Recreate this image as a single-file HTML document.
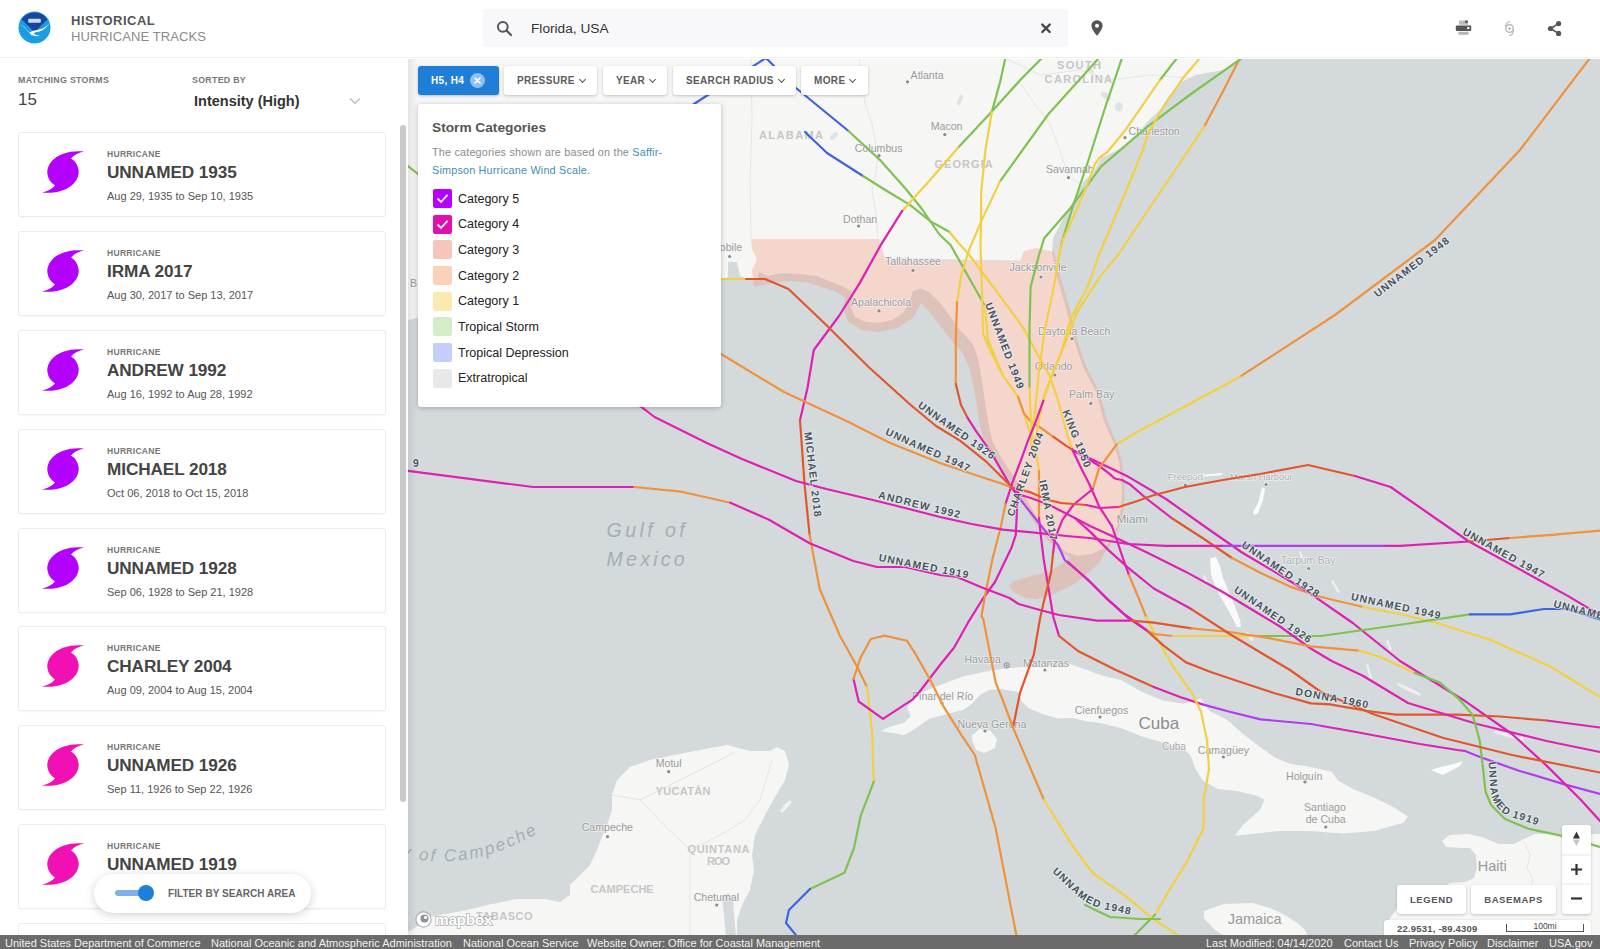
<!DOCTYPE html>
<html lang="en">
<head>
<meta charset="utf-8">
<title>Historical Hurricane Tracks</title>
<style>
*{box-sizing:border-box;margin:0;padding:0}
html,body{width:1600px;height:949px;overflow:hidden;background:#fff;font-family:"Liberation Sans",sans-serif;color:#444}
#app{position:relative;width:1600px;height:949px;overflow:hidden}
/* header */
#hdr{position:absolute;left:0;top:0;width:1600px;height:58px;background:#fff;border-bottom:1px solid #efefef;z-index:5}
#logo{position:absolute;left:18px;top:11px;width:33px;height:33px}
#t1{position:absolute;left:71px;top:12.5px;font-size:13px;font-weight:bold;letter-spacing:.5px;color:#555;line-height:16px}
#t2{position:absolute;left:71px;top:29px;font-size:13px;letter-spacing:.1px;color:#8a8a8a;line-height:16px}
#search{position:absolute;left:483px;top:9px;width:585px;height:38px;background:#f8f8fb;border-radius:2px}
#search .q{position:absolute;left:48px;top:11px;font-size:13.7px;color:#333;line-height:17px}
.abs{position:absolute}
/* sidebar */
#side{position:absolute;left:0;top:59px;width:408px;height:876px;background:#fff;overflow:hidden;z-index:3}
.lbl{position:absolute;font-size:8.8px;font-weight:bold;letter-spacing:.3px;color:#777;line-height:10px}
#cnt{position:absolute;left:18px;top:31px;font-size:17px;color:#444;line-height:20px}
#sort{position:absolute;left:194px;top:34px;font-size:14.5px;font-weight:bold;color:#333;line-height:17px}
.card{position:absolute;left:18px;width:368px;height:85px;border:1px solid #ececec;border-radius:3px;background:#fff;box-shadow:0 1px 2px rgba(0,0,0,.03)}
.card svg{position:absolute;left:22px;top:17px;width:44px;height:44px}
.card .k{position:absolute;left:88px;top:16px;font-size:8.5px;font-weight:bold;letter-spacing:.3px;color:#777;line-height:10px}
.card .n{position:absolute;left:88px;top:28px;font-size:17.2px;font-weight:bold;color:#444;line-height:22px;letter-spacing:-.1px;white-space:nowrap}
.card .d{position:absolute;left:88px;top:57px;font-size:11px;color:#555;line-height:13px;white-space:nowrap}
#sbar{position:absolute;left:400px;top:66px;width:6px;height:677px;background:#c9c9c9;border-radius:3px}
#pill{position:absolute;left:94px;top:815px;width:217px;height:39px;border-radius:20px;background:#fff;box-shadow:0 2px 10px rgba(0,0,0,.18)}
#pill .tr{position:absolute;left:21px;top:16px;width:30px;height:6px;border-radius:3px;background:#7fb2e8}
#pill .kn{position:absolute;left:44px;top:11px;width:16px;height:16px;border-radius:8px;background:#1f7ed8}
#pill .tx{position:absolute;left:74px;top:14px;font-size:10px;font-weight:bold;letter-spacing:.05px;color:#666;line-height:12px;white-space:nowrap}
/* map */
#map{position:absolute;left:408px;top:59px;width:1192px;height:876px;background:#d4dadc;overflow:hidden;z-index:1}
#map svg.m{position:absolute;left:-408px;top:-59px;width:1600px;height:949px}
#mshadow{position:absolute;left:408px;top:59px;width:9px;height:876px;background:linear-gradient(to right,rgba(0,0,0,.075),rgba(0,0,0,0));z-index:2}
/* footer */
#ftr{position:absolute;left:0;top:935px;width:1600px;height:14px;background:#6b6b6b;color:#f1f1f1;font-size:11px;line-height:14px;z-index:6;white-space:nowrap}
#ftr span{position:absolute;top:1px}
/* filter bar */
.btn{position:absolute;top:66px;height:29px;background:#fff;border-radius:3px;box-shadow:0 1px 3px rgba(0,0,0,.22);font-size:10px;font-weight:bold;letter-spacing:.35px;color:#5b5b5b;line-height:29px;text-align:left;padding-left:13px;z-index:4;white-space:nowrap}
.btn i{display:inline-block;width:5px;height:5px;border-right:1.6px solid #555;border-bottom:1.6px solid #555;transform:rotate(45deg);margin-left:5px;position:relative;top:-2px}
#pop{position:absolute;left:418px;top:104px;width:303px;height:303px;background:#fff;border-radius:3px;box-shadow:0 1px 5px rgba(0,0,0,.25);z-index:4}
#pop h3{position:absolute;left:14px;top:16px;font-size:13.7px;font-weight:bold;color:#555;line-height:16px}
#pop p{position:absolute;left:14px;top:40px;font-size:10.8px;letter-spacing:.2px;line-height:17.8px;color:#8a8a8a;width:285px;white-space:nowrap}
#pop p b{font-weight:normal;color:#3f8fb0}
.row{position:absolute;left:15px;height:19px}
.row s{position:absolute;left:0;top:0;width:19px;height:19px;border-radius:2px;text-decoration:none}
.row u{position:absolute;left:25px;top:2.7px;font-size:12.5px;color:#222;text-decoration:none;line-height:15px;white-space:nowrap}
.mbtn{position:absolute;background:#fff;border-radius:3px;box-shadow:0 1px 3px rgba(0,0,0,.22);z-index:4;font-size:9.5px;font-weight:bold;letter-spacing:.6px;color:#555;text-align:center}
</style>
</head>
<body>
<div id="app">
<div id="hdr">
<svg id="logo" viewBox="0 0 34 34"><circle cx="17" cy="17" r="16.5" fill="#1a9ee0"/><path d="M3.5 8.5 A16.5 16.5 0 0 1 30.5 8.5 L17 22 Z" fill="#16479d"/><path d="M1.2 12.5 C7 17 11 21 14.5 25.5 C15.5 23 18 21.5 21 21.5 C26 20 30.5 16 32.8 12 C29 17 24 19 19.5 19.5 C16 20 13.5 21 12.5 22.5 C9 18.5 5 15 1.2 12.5 Z" fill="#fff"/><path d="M12 22 C14 25.5 18 27 22.5 25 C19 25.2 16 24 14.5 21 Z" fill="#fff"/><rect x="10.5" y="8" width="13" height="4" rx="1" fill="#dfe8f6" opacity=".9"/></svg>
<div id="t1">HISTORICAL</div>
<div id="t2">HURRICANE TRACKS</div>
<div id="search">
<svg class="abs" style="left:13px;top:11px;width:17px;height:17px" viewBox="0 0 17 17"><circle cx="6.8" cy="6.8" r="4.9" fill="none" stroke="#555" stroke-width="2"/><path d="M10.6 10.6 L15 15" stroke="#555" stroke-width="2.2" stroke-linecap="round"/></svg>
<div class="q">Florida, USA</div>
<svg class="abs" style="left:557px;top:13px;width:12px;height:12px" viewBox="0 0 12 12"><path d="M2.3 2.6 L9.7 10 M9.7 2.6 L2.3 10" stroke="#484848" stroke-width="2.4" stroke-linecap="round"/></svg>
</div>
<svg class="abs" style="left:1091px;top:20px;width:12px;height:16px" viewBox="0 0 12 16"><path d="M6 0.3 C2.8 0.3 0.4 2.7 0.4 5.8 C0.4 9.6 6 15.7 6 15.7 C6 15.7 11.6 9.6 11.6 5.8 C11.6 2.7 9.2 0.3 6 0.3 Z" fill="#555"/><circle cx="6" cy="5.8" r="2" fill="#fff"/></svg>
<svg class="abs" style="left:1455px;top:20px;width:17px;height:16px" viewBox="0 0 17 16"><rect x="4" y="0.5" width="9" height="4.2" fill="#bbb"/><rect x="10" y="0.5" width="3" height="2.5" fill="#666"/><rect x="0.8" y="5.4" width="15.4" height="5.6" rx="1" fill="#555"/><rect x="12.2" y="7" width="2.2" height="2" fill="#fff"/><rect x="3.5" y="11.8" width="10" height="3" fill="#b5b5b5"/></svg>
<svg class="abs" style="left:1503px;top:20px;width:13px;height:17px" viewBox="0 0 13 17"><circle cx="6.5" cy="8.5" r="3.8" fill="none" stroke="#b9b9b9" stroke-width="1.4"/><circle cx="6.5" cy="8.5" r="1" fill="#888"/><path d="M2.7 8.5 C2 4.5 4 2 7 1.3 M10.3 8.5 C11 12.5 9 15 6 15.7" fill="none" stroke="#c2c2c2" stroke-width="1.3"/></svg>
<svg class="abs" style="left:1547px;top:20px;width:16px;height:17px" viewBox="0 0 16 17"><path d="M3.5 8.5 L11.5 3.6 M3.5 8.5 L11.5 13.4" stroke="#555" stroke-width="1.6"/><circle cx="3.5" cy="8.5" r="2.6" fill="#555"/><circle cx="11.6" cy="3.6" r="2.6" fill="#555"/><circle cx="11.6" cy="13.4" r="2.6" fill="#555"/></svg>
</div>
<div id="side">
<div class="lbl" style="left:18px;top:16px">MATCHING STORMS</div>
<div id="cnt">15</div>
<div class="lbl" style="left:192px;top:16px">SORTED BY</div>
<div id="sort">Intensity (High)</div>
<svg class="abs" style="left:349px;top:38px;width:12px;height:8px" viewBox="0 0 12 8"><path d="M1 1.5 L6 6.3 L11 1.5" fill="none" stroke="#bdbdbd" stroke-width="1.4"/></svg>
<div class="card" style="top:73px"><svg viewBox="0 0 44 44"><path d="M43 1.5 C32 0 17 3 10.5 11.5 A15.5 15.5 0 0 0 14 35.5 C11 39 6 41.5 1 42.5 C12 44 27 41 33.5 32.5 A15.5 15.5 0 0 0 30 8.5 C33 5 38 2.5 43 1.5 Z" fill="#b400ff"/></svg><div class="k">HURRICANE</div><div class="n">UNNAMED 1935</div><div class="d">Aug 29, 1935 to Sep 10, 1935</div></div>
<div class="card" style="top:172px"><svg viewBox="0 0 44 44"><path d="M43 1.5 C32 0 17 3 10.5 11.5 A15.5 15.5 0 0 0 14 35.5 C11 39 6 41.5 1 42.5 C12 44 27 41 33.5 32.5 A15.5 15.5 0 0 0 30 8.5 C33 5 38 2.5 43 1.5 Z" fill="#b400ff"/></svg><div class="k">HURRICANE</div><div class="n">IRMA 2017</div><div class="d">Aug 30, 2017 to Sep 13, 2017</div></div>
<div class="card" style="top:271px"><svg viewBox="0 0 44 44"><path d="M43 1.5 C32 0 17 3 10.5 11.5 A15.5 15.5 0 0 0 14 35.5 C11 39 6 41.5 1 42.5 C12 44 27 41 33.5 32.5 A15.5 15.5 0 0 0 30 8.5 C33 5 38 2.5 43 1.5 Z" fill="#b400ff"/></svg><div class="k">HURRICANE</div><div class="n">ANDREW 1992</div><div class="d">Aug 16, 1992 to Aug 28, 1992</div></div>
<div class="card" style="top:370px"><svg viewBox="0 0 44 44"><path d="M43 1.5 C32 0 17 3 10.5 11.5 A15.5 15.5 0 0 0 14 35.5 C11 39 6 41.5 1 42.5 C12 44 27 41 33.5 32.5 A15.5 15.5 0 0 0 30 8.5 C33 5 38 2.5 43 1.5 Z" fill="#b400ff"/></svg><div class="k">HURRICANE</div><div class="n">MICHAEL 2018</div><div class="d">Oct 06, 2018 to Oct 15, 2018</div></div>
<div class="card" style="top:469px"><svg viewBox="0 0 44 44"><path d="M43 1.5 C32 0 17 3 10.5 11.5 A15.5 15.5 0 0 0 14 35.5 C11 39 6 41.5 1 42.5 C12 44 27 41 33.5 32.5 A15.5 15.5 0 0 0 30 8.5 C33 5 38 2.5 43 1.5 Z" fill="#b400ff"/></svg><div class="k">HURRICANE</div><div class="n">UNNAMED 1928</div><div class="d">Sep 06, 1928 to Sep 21, 1928</div></div>
<div class="card" style="top:567px"><svg viewBox="0 0 44 44"><path d="M43 1.5 C32 0 17 3 10.5 11.5 A15.5 15.5 0 0 0 14 35.5 C11 39 6 41.5 1 42.5 C12 44 27 41 33.5 32.5 A15.5 15.5 0 0 0 30 8.5 C33 5 38 2.5 43 1.5 Z" fill="#f010b4"/></svg><div class="k">HURRICANE</div><div class="n">CHARLEY 2004</div><div class="d">Aug 09, 2004 to Aug 15, 2004</div></div>
<div class="card" style="top:666px"><svg viewBox="0 0 44 44"><path d="M43 1.5 C32 0 17 3 10.5 11.5 A15.5 15.5 0 0 0 14 35.5 C11 39 6 41.5 1 42.5 C12 44 27 41 33.5 32.5 A15.5 15.5 0 0 0 30 8.5 C33 5 38 2.5 43 1.5 Z" fill="#f010b4"/></svg><div class="k">HURRICANE</div><div class="n">UNNAMED 1926</div><div class="d">Sep 11, 1926 to Sep 22, 1926</div></div>
<div class="card" style="top:765px"><svg viewBox="0 0 44 44"><path d="M43 1.5 C32 0 17 3 10.5 11.5 A15.5 15.5 0 0 0 14 35.5 C11 39 6 41.5 1 42.5 C12 44 27 41 33.5 32.5 A15.5 15.5 0 0 0 30 8.5 C33 5 38 2.5 43 1.5 Z" fill="#f010b4"/></svg><div class="k">HURRICANE</div><div class="n">UNNAMED 1919</div><div class="d">Sep 02, 1919 to Sep 16, 1919</div></div>
<div class="card" style="top:864px"><svg viewBox="0 0 44 44"><path d="M43 1.5 C32 0 17 3 10.5 11.5 A15.5 15.5 0 0 0 14 35.5 C11 39 6 41.5 1 42.5 C12 44 27 41 33.5 32.5 A15.5 15.5 0 0 0 30 8.5 C33 5 38 2.5 43 1.5 Z" fill="#f010b4"/></svg><div class="k">HURRICANE</div><div class="n">DONNA 1960</div><div class="d">Aug 29, 1960 to Sep 14, 1960</div></div>
<div id="sbar"></div>
<div id="pill"><div class="tr"></div><div class="kn"></div><div class="tx">FILTER BY SEARCH AREA</div></div>
</div>
<!--MAP-->
<div id="map"><svg class="m" viewBox="0 0 1600 949">
<rect x="408" y="58" width="1192" height="880" fill="#d4dadc"/>
<polygon points="408,58 1243,58 1223,70 1196,75 1181,82 1168,97 1160,110 1147,122 1135,139 1118,150 1101,158 1093,173 1084,181 1074,200 1063,219 1053,238 1052,253 1056,274 1066,308 1073,337 1083,367 1096,392 1104,421 1113.7,443.8 1119.4,462.8 1122,487.4 1121.3,506.4 1117.5,525.4 1111.8,538.7 1104,548 1092.8,553.8 1077.6,555.7 1066.3,552 1054.9,542.5 1043.5,529 1036,516 1026.4,498.8 1015,478 1009,470 1000,455 992,440 988,420 985,401 982,382 979,363 974,346 965,335 958,328 951,318 945,309 937.5,300 929,292 921,288.5 913,291 910,301 903,313 892,320 879,323 866,322 855,317 851,307 855,300 851,291 840,285 829,281 817,276 800,274 782,273 767,276 759,272 757,280 748,279 740,276 737,262 728,262 728,277 718,280 600,285 500,300 408,320" fill="#f6f6f5" />
<polygon points="408,931 412,930 430,917 467,910 492,904 517,899 545,899 560,902 570,895 570,885 580,875 590,865 597,850 602,837 607,825 612,810 612,795 617,780 630,767 650,760 675,755 705,749 727,745 750,751 770,751 777,747 785,751 789,765 785,780 775,797 765,815 755,835 752,855 754,870 750,890 742,905 737,920 737,936 408,936" fill="#f6f6f5" />
<polygon points="881,731 889.5,727 904,722.7 910.6,716.4 907.4,708 912.7,697.4 929.5,689 946.4,682.7 963,676.4 984,672 1001,669 1020,667 1043,665.8 1062,666 1070,664 1087,670 1102.6,675.7 1121,680 1142,692 1163,700.6 1184,703.8 1201,698.5 1209.6,711 1226.5,719.6 1243,734 1260,747 1275,757.5 1289.7,763.8 1310.8,767 1331.9,772 1338,780.7 1353,789 1374,797.6 1395,808 1407.8,816.5 1403.5,822.8 1374,831 1342.4,833.4 1310.8,831 1279,831 1247.6,834.4 1235,835.5 1243,825 1260,810 1264.4,799.7 1256,795.4 1237,791 1218,789 1203,780.7 1195,768 1190.6,755.4 1184,749 1163,742.7 1142,736.4 1121,728 1100,723 1085,721 1072.8,718 1058,718.5 1043,714.3 1028.5,708 1022,701.6 1018,692 1001,689 988.5,690 980,695 971.7,703.8 963,710 946.4,714.3 929.5,718.5 914.8,729 904,735" fill="#f6f6f5" />
<polygon points="971.7,735.4 980,729 990.6,731 997,739.6 994.9,748 984.3,753 976,750 972.7,741.7" fill="#f6f6f5" />
<polygon points="1204,911 1224,904 1252,903 1270,908 1283,914 1296,922 1304,929 1308,936 1224,936 1214,929 1204,918" fill="#f6f6f5" />
<polygon points="1442,841 1450,835 1468,834 1482,837 1499,844 1514,844 1528,837 1535,834 1600,834 1600,936 1384,936 1386,925 1392,915 1400,905 1420,897 1440,890 1450,883 1465,882 1474,878 1477,868 1476,855 1470,848 1462,848 1446,847" fill="#f6f6f5" />
<polygon points="780,811 784,805 790,800 792,802 787,808 782,813" fill="#f1f1f0" />
<polygon points="722,898 728,893 733,897 734,915 736,936 726,936 724,915" fill="#d4dadc" />
<polygon points="1210,558 1216,557 1220,566 1223,578 1228,590 1234,604 1240,620 1241,627 1237,627 1232,617 1226,606 1220,596 1215,586 1211,574" fill="#fafafa" />
<polygon points="1262,487 1265,489 1263,500 1258,513 1254,515 1253,512 1258,503 1260,495" fill="#fafafa" />
<polygon points="1190,475.5 1205,474.5 1222,473 1222,475 1205,476.5 1190,477.5" fill="#fafafa" />
<polygon points="1431,770 1443,775 1460,766 1463,761 1450,765 1440,767" fill="#fafafa" />
<polygon points="1366,665 1368,664 1372,678 1370,679" fill="#eef0f0" />
<polygon points="1398,683 1410,688 1421,694 1420,696 1408,691 1397,685" fill="#eef0f0" />
<polygon points="1299,552 1301,551 1304,560 1302,561" fill="#eef0f0" />
<polygon points="1331,581 1333,580 1340,592 1338,593" fill="#eef0f0" />
<polygon points="1245,633 1248,632 1254,640 1251,641" fill="#eef0f0" />
<polygon points="1495,731 1510,734 1524,738 1523,740 1508,737 1494,733" fill="#eef0f0" />
<polygon points="1386,641 1388,640 1392,650 1390,651" fill="#eef0f0" />
<polygon points="1203,576 1205,575 1208,583 1206,584" fill="#eef0f0" />
<g fill="none" stroke="#e4e5e5" stroke-width="1">
<polyline points="859,58 865,103 872,124 878,156 876,173 872,190 876,215 878,238"/>
<polyline points="1019,82 1035,104 1050,124 1058,145 1063,160 1069,177 1080,183"/>
<polyline points="751,58 752,120 750,180 751,239"/>
<polyline points="885,259 900,258 960,260 1020,261"/>
<polyline points="1005,58 1040,75 1080,70 1110,80 1150,75 1190,78"/>
<polyline points="612,795 640,800 665,826 690,850 690,935"/>
<polyline points="640,800 660,790 700,770 735,752"/>
<polyline points="690,850 720,835 745,820 760,800 772,760"/>
<polyline points="1524,841 1530,855 1527,868 1533,880 1528,896 1534,915"/>
</g>
<g fill="#dfe3e4"><ellipse cx="1106" cy="96" rx="6" ry="3" transform="rotate(35 1106 96)"/><ellipse cx="1119" cy="107" rx="4" ry="4.5"/><ellipse cx="834" cy="136" rx="5" ry="2.5" transform="rotate(-40 834 136)"/>
<ellipse cx="1090" cy="70" rx="5" ry="2" transform="rotate(40 1090 70)"/><ellipse cx="960" cy="100" rx="2" ry="6" transform="rotate(20 960 100)"/></g>
<polygon points="751,239 879,239 883,251 885,259 1020,261 1024,251 1037,248 1054,252 1059,272 1069,306 1076,336 1086,366 1099,391 1107,420 1116.5,443 1122,462 1124.5,487 1124,507 1120,526 1114,540 1104,553.8 1100.4,561.4 1089,572.8 1073.8,584.2 1054.9,593.7 1036,599.4 1024.5,597.5 1013,591.8 1009.3,586 1013,581.4 1022.6,578.5 1036,574.7 1051,571 1062.5,563.3 1070,557.6 1062,553 1051,544 1040,531 1031,517 1021,500 1010,481 1003,472 993,459 984,442 979,421 976,400 973,384 969,367 962,352 952,341 944,331 936,320 928,310 921,303 913,318 897,328 879,332 862,330 848,322 843,308 845,298 836,292 822,287 806,282 786,281 768,284 754,287 752,270 757,259 752,249" fill="#f38b6c" fill-opacity=".29"/>
<polygon points="1070,460.5 1073,460 1074,463 1071,464" fill="#e3cfca" />
<g font-family="Liberation Sans, sans-serif" style="paint-order:stroke" stroke="#f7f7f7" stroke-opacity=".7" stroke-width="1.6" stroke-linejoin="round">
<text x="910.6" y="78.6" font-size="10.6" fill="#9b9b9b" >Atlanta</text><circle cx="907.5" cy="81.8" r="1.6" fill="#8a8a8a"/>
<text x="930.7" y="129.8" font-size="10.6" fill="#9b9b9b" >Macon</text><circle cx="944.8" cy="134.6" r="1.6" fill="#8a8a8a"/>
<text x="854.8" y="151.9" font-size="10.6" fill="#9b9b9b" >Columbus</text><circle cx="879" cy="155.7" r="1.6" fill="#8a8a8a"/>
<text x="843" y="222.5" font-size="10.6" fill="#9b9b9b" >Dothan</text><circle cx="858.6" cy="226" r="1.6" fill="#8a8a8a"/>
<text x="711" y="251" font-size="10.6" fill="#9b9b9b" >Mobile</text><circle cx="729.7" cy="256.5" r="1.6" fill="#8a8a8a"/>
<text x="885" y="265.3" font-size="10.6" fill="#9b9b9b" >Tallahassee</text><circle cx="913" cy="270.4" r="1.6" fill="#8a8a8a"/>
<text x="851" y="305.6" font-size="10.6" fill="#9b9b9b" >Apalachicola</text><circle cx="879" cy="310.9" r="1.6" fill="#8a8a8a"/>
<text x="1046" y="173" font-size="10.6" fill="#9b9b9b" >Savannah</text><circle cx="1068.5" cy="177.6" r="1.6" fill="#8a8a8a"/>
<text x="1128.5" y="135" font-size="10.6" fill="#9b9b9b" >Charleston</text><circle cx="1125" cy="137.6" r="1.6" fill="#8a8a8a"/>
<text x="1009.5" y="271.3" font-size="10.6" fill="#9b9b9b" >Jacksonville</text><circle cx="1041" cy="277" r="1.6" fill="#8a8a8a"/>
<text x="1038" y="334.5" font-size="10.6" fill="#9b9b9b" >Daytona Beach</text><circle cx="1072" cy="338.7" r="1.6" fill="#8a8a8a"/>
<text x="1034.8" y="370" font-size="10.6" fill="#9b9b9b" >Orlando</text><circle cx="1054.8" cy="375" r="1.6" fill="#8a8a8a"/>
<text x="1069" y="398" font-size="10.6" fill="#9b9b9b" >Palm Bay</text><circle cx="1090.8" cy="403.4" r="1.6" fill="#8a8a8a"/>
<text x="964.4" y="663" font-size="10.6" fill="#9b9b9b" >Havana</text>
<text x="1023" y="666.8" font-size="10.6" fill="#9b9b9b" >Matanzas</text><circle cx="1044.9" cy="670" r="1.6" fill="#8a8a8a"/>
<text x="912" y="699.7" font-size="10.6" fill="#9b9b9b" >Pinar del Río</text><circle cx="942" cy="703" r="1.6" fill="#8a8a8a"/>
<text x="957.5" y="728" font-size="10.6" fill="#9b9b9b" >Nueva Gerona</text><circle cx="985" cy="731" r="1.6" fill="#8a8a8a"/>
<text x="1074.7" y="713.6" font-size="10.6" fill="#9b9b9b" >Cienfuegos</text><circle cx="1100" cy="717" r="1.6" fill="#8a8a8a"/>
<text x="1197.8" y="753.5" font-size="10.6" fill="#9b9b9b" >Camagüey</text><circle cx="1223.4" cy="757" r="1.6" fill="#8a8a8a"/>
<text x="1286" y="779.5" font-size="10.6" fill="#9b9b9b" >Holguín</text><circle cx="1305" cy="782" r="1.6" fill="#8a8a8a"/>
<text x="1304" y="810.6" font-size="10.6" fill="#9b9b9b" >Santiago</text>
<text x="1305.7" y="822.8" font-size="10.6" fill="#9b9b9b" >de Cuba</text><circle cx="1325.8" cy="827" r="1.6" fill="#8a8a8a"/>
<text x="655.7" y="767" font-size="10.6" fill="#9b9b9b" >Motul</text><circle cx="668.7" cy="771.7" r="1.6" fill="#8a8a8a"/>
<text x="581.7" y="831" font-size="10.6" fill="#9b9b9b" >Campeche</text><circle cx="607.5" cy="836.7" r="1.6" fill="#8a8a8a"/>
<text x="693.7" y="900.5" font-size="10.6" fill="#9b9b9b" >Chetumal</text><circle cx="716.7" cy="905" r="1.6" fill="#8a8a8a"/>
<circle cx="1006.7" cy="665.4" r="2.6" fill="none" stroke="#8a8a8a" stroke-opacity="1" stroke-width="1"/><circle cx="1006.7" cy="665.4" r="1" fill="#8a8a8a" stroke="none"/>
<text x="410" y="287" font-size="10.6" fill="#9b9b9b" >B</text>
<text x="1116.5" y="523" font-size="11.8" fill="#979797" >Miami</text><circle cx="1111.8" cy="525.8" r="1.6" fill="#8a8a8a"/>
<text x="1167.8" y="480.4" font-size="9.4" fill="#b0b0b0" >Freeport</text><circle cx="1185.4" cy="485" r="1.6" fill="#8a8a8a"/>
<text x="1230" y="480" font-size="9.4" fill="#b0b0b0" >Marsh Harbour</text><circle cx="1266" cy="484.5" r="1.6" fill="#8a8a8a"/>
<text x="1281" y="564" font-size="10.2" fill="#b0b0b0" >Tarpum Bay</text><circle cx="1308.6" cy="568.5" r="1.6" fill="#8a8a8a"/>
<text x="1138.5" y="729" font-size="17" fill="#8c8c8c" stroke-width="2">Cuba</text>
<text x="1162" y="750" font-size="10" fill="#aaa" >Cuba</text>
<text x="1227.7" y="924" font-size="14.5" fill="#9a9a9a" >Jamaica</text>
<text x="1477.8" y="870.8" font-size="14.5" fill="#9a9a9a" >Haiti</text>
</g>
<g font-family="Liberation Sans, sans-serif" font-weight="bold" fill="#c6c6c6" font-size="11">
<text x="759" y="138.8" textLength="64" lengthAdjust="spacing">ALABAMA</text>
<text x="934.4" y="167.7" textLength="58.4" lengthAdjust="spacing">GEORGIA</text>
<text x="1056.9" y="68.7" textLength="44.1" lengthAdjust="spacing">SOUTH</text>
<text x="1044.6" y="83" textLength="67.4" lengthAdjust="spacing">CAROLINA</text>
<text x="655.7" y="795" textLength="54.8" lengthAdjust="spacing">YUCATÁN</text>
<text x="687.5" y="852.5" textLength="62" lengthAdjust="spacing">QUINTANA</text>
<text x="707" y="864.5" textLength="23" lengthAdjust="spacing">ROO</text>
<text x="590.5" y="893" textLength="63.2" lengthAdjust="spacing">CAMPECHE</text>
<text x="476" y="920" textLength="56.5" lengthAdjust="spacing">TABASCO</text>
</g>
<g font-family="Liberation Sans, sans-serif" font-style="italic" fill="#a4aeb1">
<text x="606.6" y="536.5" font-size="19.5" textLength="78" lengthAdjust="spacing">Gulf of</text>
<text x="606.6" y="565.5" font-size="19.5" textLength="78" lengthAdjust="spacing">Mexico</text>
<path id="boc" d="M401 856 Q 472 875 548 827" fill="none"/>
<text font-size="17" letter-spacing="2.3"><textPath href="#boc" startOffset="0">y of Campeche</textPath></text>
</g>
<g fill="none" stroke-width="2.2" stroke-linejoin="round" stroke-linecap="round">
<polyline stroke="#7ec352" points="400,160 418,174 440,190"/>
<polyline stroke="#3f63e0" points="650,135 697,102 766,58"/>
<polyline stroke="#3f63e0" points="766,58 796,88 848.5,131"/>
<polyline stroke="#7ec352" points="848.5,131 880,160 905,188 922,209 939,234 950.5,245 985,306"/>
<polyline stroke="#f3d043" points="985,306 988,340 1003,375.6 1018,396.7 1026.4,421 1032.7,442 1038,463 1039,471"/>
<polyline stroke="#f0913c" points="1039,471 1039,518"/>
<polyline stroke="#de21b2" points="1039,518 1041,537 1043.8,560 1049.5,594 1053.3,617 1059,635.9"/>
<polyline stroke="#e2562e" points="1059,635.9 1078,651 1115.9,670 1153.8,687"/>
<polyline stroke="#de21b2" points="1153.8,687 1180,697 1202.5,704.4"/>
<polyline stroke="#b43cf0" points="1202.5,704.4 1229.7,711.7 1260.6,719.4 1311,724 1322,726"/>
<polyline stroke="#de21b2" points="1322,726 1356,732 1420,744 1457.5,750 1465,751"/>
<polyline stroke="#b43cf0" points="1465,751 1480,757 1519,770.7 1565.4,784.6 1600,793.9"/>
<polyline stroke="#3f63e0" points="805,132 827,153 863,176"/>
<polyline stroke="#7ec352" points="863,176 888.5,192 909.6,204.6 930.7,221.4 949.6,232"/>
<polyline stroke="#f3d043" points="949.6,232 958,242.5 968.6,254 982,272 1003,300 1024,329 1035,350 1049.5,375.6 1058,400 1066.4,431.6 1072,449"/>
<polyline stroke="#de21b2" points="1072,449 1081.3,468.4 1089,483.5 1099.5,507 1111.8,526 1118.5,545 1123.5,560 1129,575"/>
<polyline stroke="#f0913c" points="1129,575 1138.6,598 1146.2,617"/>
<polyline stroke="#f3d043" points="1146.2,617 1157.6,639.7 1172.8,666 1191.7,692.8 1201,711.7 1207,740 1209,769 1203.7,800 1203.7,828 1186.3,862.7 1169,890.5 1155,914.7"/>
<polyline stroke="#7ec352" points="1155,914.7 1137.8,932 1130,940"/>
<polyline stroke="#7ec352" points="1042,58 1020,80.3 989.6,114 958,147.7"/>
<polyline stroke="#f3d043" points="958,147.7 930.7,179.3 902.2,210.9"/>
<polyline stroke="#de21b2" points="902.2,210.9 881,244.6 860,282.6 839,316 813.8,350 807.5,388 800,420"/>
<polyline stroke="#e2562e" points="800,420 804.5,484 809.6,535"/>
<polyline stroke="#f0913c" points="809.6,535 819.7,589 840,636 856.8,666 867,687"/>
<polyline stroke="#f3d043" points="867,687 872,731 873.8,781.6"/>
<polyline stroke="#7ec352" points="873.8,781.6 860.7,815.8 854,848 844.5,872.7 810,889"/>
<polyline stroke="#3f63e0" points="810,889 789,910 786,923 795.6,934.6"/>
<polyline stroke="#7ec352" points="1005.4,58 1000,82.4 991.8,112"/>
<polyline stroke="#f3d043" points="991.8,112 985.4,150 981.2,192 981,223.5 980.5,245 982,290 983,333.5 990,350 1003,375.6"/>
<polyline stroke="#f0913c" points="1018,396.7 1024,413.5 1030.8,421.6 1041,428 1053.5,436.8"/>
<polyline stroke="#e2562e" points="1053.5,436.8 1066,445.6 1073.8,450.7"/>
<polyline stroke="#de21b2" points="1073.8,450.7 1086.4,458 1099,465.8 1109,473.4 1114.7,478.5 1122,480 1130.6,484.8 1147,499 1171.6,518"/>
<polyline stroke="#e2562e" points="1171.6,518 1204,539 1232,558"/>
<polyline stroke="#f0913c" points="1232,558 1260.8,573 1290,586.6 1321,597 1363,607"/>
<polyline stroke="#f3d043" points="1363,607 1400,614 1436,622.8 1490,639.7 1550.8,666.7 1600,697"/>
<polyline stroke="#de21b2" points="1073.8,450.7 1090,458.5 1128,476.6 1166,499 1204,526 1242,552.5 1280,575 1310.7,593.8 1352.8,623 1400,661 1463,699.7 1512,734 1546.6,765.6 1581,800 1600,821"/>
<polyline stroke="#7ec352" points="1099,58 1048.5,114 1000,181.4"/>
<polyline stroke="#f3d043" points="1000,181.4 981.2,221.4 968.6,251 961,276.6 957,302"/>
<polyline stroke="#f0913c" points="957,302 955.8,340 955.8,384"/>
<polyline stroke="#e2562e" points="955.8,384 961,405 967.6,417.8"/>
<polyline stroke="#de21b2" points="967.6,417.8 976.4,431.7 991.6,453.2 1001.7,470.9 1010.6,486 1016.9,494.9"/>
<polyline stroke="#b43cf0" points="1016.9,494.9 1025.7,506.3 1045,530.6 1058,545 1064.7,560 1087.4,579"/>
<polyline stroke="#de21b2" points="1087.4,579 1106.4,598 1125.4,615 1146.2,630"/>
<polyline stroke="#f0913c" points="1146.2,630 1153.8,634 1172.8,636"/>
<polyline stroke="#f3d043" points="1172.8,636 1229.7,636 1258,636"/>
<polyline stroke="#7ec352" points="1258,636 1290,636 1321,636 1402,624.5 1469.8,614.4"/>
<polyline stroke="#3f63e0" points="1469.8,614.4 1510,614.4 1544,609 1567.6,609 1600,619.5"/>
<polyline stroke="#de21b2" points="1600,727.5 1546.6,720.5"/>
<polyline stroke="#e2562e" points="1546.6,720.5 1500,716.5 1457.5,714.7 1395.6,714.7 1367.5,711 1330,704.4 1311,703.4 1273.8,693 1234.4,680 1210.7,672 1186,662.4 1163.3,645.4 1146.2,630"/>
<polyline stroke="#de21b2" points="1146.2,630 1127,617 1108,600 1090,582 1068,562"/>
<polyline stroke="#f0913c" points="1240,58 1223.3,90.8 1204.3,126.6"/>
<polyline stroke="#f3d043" points="1204.3,126.6 1179,164.5 1147.5,211 1118,255 1100,276.6 1077,312 1066.4,339.8 1053.8,371 1045,392.5 1039,420 1034.8,445"/>
<polyline stroke="#7ec352" points="1122,58 1105,108 1088.5,160 1072.7,207 1061,245"/>
<polyline stroke="#f3d043" points="1061,245 1053.8,287 1045,329 1039,371 1034.8,413.5 1030.6,445"/>
<polyline stroke="#7ec352" points="1242,58 1189.6,95 1147.5,126.6 1101,166.7 1071.6,206.7 1044.2,238.3 1039,255 1030.6,287 1029.5,329 1029.5,388"/>
<polyline stroke="#f3d043" points="1029.5,388 1030.6,413.5 1032.7,445"/>
<polyline stroke="#7ec352" points="1177,58 1160,80"/>
<polyline stroke="#f3d043" points="1160,80 1126.4,128.7 1107.4,152 1099,158 1094.8,164.5 1088.5,181.4 1078,206.7 1063,240 1059,255"/>
<polyline stroke="#f3d043" points="1200,58 1183,78 1160,112 1147.5,135 1143,150 1126.4,190 1109.5,230 1099,255 1087.5,287 1070.6,318.7 1062,350 1049.5,382 1043.4,400.7"/>
<polyline stroke="#de21b2" points="1043.4,400.7 1035.8,421.6 1028,440.6 1020.7,460.8 1013,481 1005.5,503.8"/>
<polyline stroke="#de21b2" points="1018,484 1016.5,520 1015.8,534.8 1011.6,547.5 995,582 982,600 968,622.7 954,647.7 940,665 921,690"/>
<polyline stroke="#f0913c" points="1590,58 1520,150 1435,240 1335,315 1240,376.7"/>
<polyline stroke="#f3d043" points="1240,376.7 1171.7,413.5 1140,430.5 1116.7,444.4"/>
<polyline stroke="#f0913c" points="1116.7,444.4 1099,468.4 1092.8,489"/>
<polyline stroke="#de21b2" points="1092.8,489 1073.8,504.5 1062.5,519.7 1054.9,538.7 1053,553.8"/>
<polyline stroke="#e2562e" points="1053,553.8 1051,572.8 1047.3,588 1043.5,603 1040,618.8 1033.8,654.7 1020,692.8 1013,727.5"/>
<polyline stroke="#f0913c" points="1013,727.5 1044,800"/>
<polyline stroke="#f3d043" points="1044,800 1072,845 1092.7,873 1127.4,897.4 1151.7,918 1176,933.8 1180,937"/>
<polyline stroke="#7ec352" points="1085,905 1110,917 1140,919 1160,919"/>
<polyline stroke="#f0913c" points="1005.5,503.8 1001,526 992.7,558 985,595.8 981.5,616 983.5,620 995.6,682.4 1002.6,699.7 1013,727.5"/>
<polyline stroke="#f3d043" points="700,279 746,279"/>
<polyline stroke="#e2562e" points="746,279 765,279 788.5,289 826,324.7 868.6,367 910.7,405 936,426 960,440.6 985.3,460.8 1010.6,486"/>
<polyline stroke="#de21b2" points="1010.6,486 1020.7,495 1030.8,498 1049.5,505 1074.8,518 1090,526 1118.5,539 1147,552.5 1185,571.4 1222.8,592 1251,609 1280,626.5 1310.7,648.5 1331.7,661 1363.3,676 1408,703 1477,724 1546.6,741 1600,752"/>
<polyline stroke="#f0913c" points="640,305 721,354 784,392 847.5,421.6 889.6,442.7 940,463 971.6,473.7 1003,484 1010.6,487.3"/>
<polyline stroke="#e2562e" points="1010.6,487.3 1030.8,492.4 1048.5,500 1061,503 1086.4,505"/>
<polyline stroke="#de21b2" points="1086.4,505 1099.5,508 1118.5,507"/>
<polyline stroke="#e2562e" points="1118.5,507 1137.4,501 1152.6,495.5 1185,487 1222.8,480 1260,474 1308,465 1355,476"/>
<polyline stroke="#de21b2" points="1355,476 1390.6,487 1433.7,517 1469,541.5 1501,559 1535,577.8 1568.6,596.4 1600,615"/>
<polyline stroke="#de21b2" points="620,395 641,406.7 654.5,417 708.4,443.8 742,459 796,481 826.4,489 877,501 905,508 940,517 971.6,524 1003,529.6 1034.8,532.7 1066.4,536 1090,538 1128,544 1166,545.8 1222.8,545.8"/>
<polyline stroke="#b43cf0" points="1222.8,545.8 1385,545.8"/>
<polyline stroke="#de21b2" points="1385,545.8 1400,545.8 1469,541.5"/>
<polyline stroke="#e2562e" points="1469,541.5 1510,538"/>
<polyline stroke="#f0913c" points="1510,538 1551.8,534.8 1600,530.6"/>
<polyline stroke="#de21b2" points="408,470.8 533,487 634.3,487"/>
<polyline stroke="#f0913c" points="634.3,487 681.5,491.7 730.4,502.8"/>
<polyline stroke="#de21b2" points="730.4,502.8 769,519.7 809.6,543.3 853.4,561 877,567 905,567 940,575 957,577 982,587.5 1009.5,598 1018.6,604 1040,610 1059,615 1097,620.7 1131,620.7"/>
<polyline stroke="#e2562e" points="1131,620.7 1153.8,622.6 1191.7,628.3"/>
<polyline stroke="#f0913c" points="1191.7,628.3 1229.7,632 1267.6,637.8 1310.7,646.4 1359,650.6"/>
<polyline stroke="#f3d043" points="1359,650.6 1380,657 1414.8,673"/>
<polyline stroke="#7ec352" points="1414.8,673 1440,682.6 1458.8,698.8 1472.7,715 1479.7,740.5 1483,768 1485.5,791.5 1491,805 1505,819 1528,828.6 1560.8,835.6 1600,847"/>
<polyline stroke="#de21b2" points="1074.8,518 1090,531.6 1109,550.6 1128,567.6 1153.8,588.5 1191.7,609.3"/>
<polyline stroke="#e2562e" points="1191.7,609.3 1229.7,634 1267.6,656.7 1290,670 1321,692 1373,714 1442.6,737.8 1512,755 1600,772.5"/>
<polyline stroke="#de21b2" points="921,690 912.4,699.7 883,718.8 858.7,701.5 853.5,679"/>
<polyline stroke="#f0913c" points="853.5,679 860.4,658 870.8,639 884.7,635.6 907,640.8 915.9,654.7 929.7,679 943.6,706.7 961,734.4 974.8,755 995.6,828 1016.4,935.5"/>
</g>
<g font-family="Liberation Sans, sans-serif" font-size="10.4" font-weight="bold" fill="#47555f" letter-spacing="1.1" style="paint-order:stroke" stroke="#eef1f2" stroke-opacity=".75" stroke-width="1.8" stroke-linejoin="round" text-anchor="middle">
<text transform="translate(1411.8 266.8) rotate(-37.5)" y="3.6">UNNAMED 1948</text>
<text transform="translate(1004.8 346.0) rotate(69.1)" y="3.6">UNNAMED 1949</text>
<text transform="translate(1077.0 439.0) rotate(68.2)" y="3.6">KING 1950</text>
<text transform="translate(957.0 430.6) rotate(35.3)" y="3.6">UNNAMED 1926</text>
<text transform="translate(928.4 450.0) rotate(24.2)" y="3.6">UNNAMED 1947</text>
<text transform="translate(1025.3 473.7) rotate(-70.1)" y="3.6">CHARLEY 2004</text>
<text transform="translate(1048.4 510.5) rotate(79.3)" y="3.6">IRMA 2017</text>
<text transform="translate(919.9 504.8) rotate(13.9)" y="3.6">ANDREW 1992</text>
<text transform="translate(924.2 566.2) rotate(11.1)" y="3.6">UNNAMED 1919</text>
<text transform="translate(813.0 474.9) rotate(83.1)" y="3.6">MICHAEL 2018</text>
<text transform="translate(1281.0 569.5) rotate(34.2)" y="3.6">UNNAMED 1928</text>
<text transform="translate(1273.3 614.7) rotate(34.6)" y="3.6">UNNAMED 1926</text>
<text transform="translate(1396.4 606.0) rotate(12.2)" y="3.6">UNNAMED 1949</text>
<text transform="translate(1504.1 553.3) rotate(29.0)" y="3.6">UNNAMED 1947</text>
<text transform="translate(1332.4 698.0) rotate(10.6)" y="3.6">DONNA 1960</text>
<text transform="translate(1553 607) rotate(14)" text-anchor="start" y="0">UNNAMED 1935</text>
<path id="p1919" d="M1488.5 762 L1490.5 790 Q1493 808 1508 816 L1556 831" fill="none" stroke="none"/>
<text text-anchor="start"><textPath href="#p1919" startOffset="0">UNNAMED 1919</textPath></text>
<path id="p1948" d="M1052 872 L1080 898 Q1092 907 1108 910 L1140 917" fill="none" stroke="none"/>
<text text-anchor="start"><textPath href="#p1948" startOffset="0">UNNAMED 1948</textPath></text>
<text x="413" y="467" text-anchor="start" letter-spacing="0">9</text>
</g>
<g><circle cx="423.5" cy="919.5" r="7.6" fill="#fff" fill-opacity=".9" stroke="#7a8285" stroke-opacity=".55" stroke-width="1.2"/><circle cx="424.5" cy="918.5" r="4" fill="#8b9396"/><circle cx="425.6" cy="917.4" r="1.7" fill="#fff"/>
<text x="435" y="924.5" font-family="Liberation Sans, sans-serif" font-weight="bold" font-size="15.5" letter-spacing="-.4" fill="#fff" stroke="#7a8285" stroke-opacity=".6" stroke-width="1.6" style="paint-order:stroke">mapbox</text></g>
</svg></div>
<!--/MAP-->
<div id="mshadow"></div>
<div class="btn" style="left:418px;width:81px;background:#1f7ed8;color:#fff;box-shadow:0 1px 3px rgba(0,0,0,.25)">H5, H4<span style="position:absolute;left:52px;top:7px;width:15px;height:15px;border-radius:8px;background:#8fc0ee"></span><svg style="position:absolute;left:56px;top:11px;width:7px;height:7px" viewBox="0 0 7 7"><path d="M1 1 L6 6 M6 1 L1 6" stroke="#fff" stroke-width="1.6" stroke-linecap="round"/></svg></div>
<div class="btn" style="left:504px;width:93px">PRESSURE<i></i></div>
<div class="btn" style="left:603px;width:64px">YEAR<i></i></div>
<div class="btn" style="left:673px;width:123px">SEARCH RADIUS<i></i></div>
<div class="btn" style="left:801px;width:67px">MORE<i></i></div>
<div id="pop"><h3>Storm Categories</h3><p>The categories shown are based on the <b>Saffir-<br>Simpson Hurricane Wind Scale.</b></p>
<div class="row" style="top:85.0px"><s style="background:#b400ff"><svg style="position:absolute;left:3px;top:4px;width:13px;height:11px" viewBox="0 0 13 11"><path d="M1.5 5.5 L5 9 L11.5 1.8" fill="none" stroke="#fff" stroke-width="1.8"/></svg></s><u>Category 5</u></div>
<div class="row" style="top:110.7px"><s style="background:#e010b0"><svg style="position:absolute;left:3px;top:4px;width:13px;height:11px" viewBox="0 0 13 11"><path d="M1.5 5.5 L5 9 L11.5 1.8" fill="none" stroke="#fff" stroke-width="1.8"/></svg></s><u>Category 4</u></div>
<div class="row" style="top:136.3px"><s style="background:#f6c5bb"></s><u>Category 3</u></div>
<div class="row" style="top:161.9px"><s style="background:#fbd2b8"></s><u>Category 2</u></div>
<div class="row" style="top:187.6px"><s style="background:#fbeab0"></s><u>Category 1</u></div>
<div class="row" style="top:213.2px"><s style="background:#d4ecc8"></s><u>Tropical Storm</u></div>
<div class="row" style="top:238.9px"><s style="background:#c3cffa"></s><u>Tropical Depression</u></div>
<div class="row" style="top:264.5px"><s style="background:#e8e8e8"></s><u>Extratropical</u></div>
</div>
<div class="mbtn" style="left:1397px;top:885px;width:69px;height:29px;line-height:29px">LEGEND</div>
<div class="mbtn" style="left:1471px;top:885px;width:85px;height:29px;line-height:29px">BASEMAPS</div>
<div class="mbtn" style="left:1562px;top:825px;width:29px;height:89px">
<svg style="position:absolute;left:0;top:0;width:29px;height:89px" viewBox="0 0 29 89"><path d="M0 30 H29 M0 59 H29" stroke="#e4e4e4" stroke-width="1"/><path d="M14.5 6.5 L18 13.5 H11 Z" fill="#333"/><path d="M14.5 21 L18 14.5 H11 Z" fill="#c6c6c6"/><path d="M9 44.5 H20 M14.5 39 V50" stroke="#333" stroke-width="2.2"/><path d="M9 73.5 H20" stroke="#333" stroke-width="2.2"/></svg></div>
<div class="mbtn" style="left:1384px;top:920px;width:207px;height:16px;border-radius:3px 3px 0 0;box-shadow:0 0 2px rgba(0,0,0,.15)">
<span style="position:absolute;left:13px;top:3px;font-size:9.5px;letter-spacing:.2px;color:#555;line-height:11px">22.9531, -89.4309</span>
<span style="position:absolute;left:122px;top:4px;width:78px;height:8px;border:1.5px solid #555;border-top:none"></span>
<span style="position:absolute;left:122px;top:1px;width:78px;text-align:center;font-size:8.5px;font-weight:normal;letter-spacing:0;color:#444;line-height:10px">100mi</span>
</div>
<div id="ftr"><span style="left:5px">United States Department of Commerce</span><span style="left:211px">National Oceanic and Atmospheric Administration</span><span style="left:463px">National Ocean Service</span><span style="left:587px">Website Owner: Office for Coastal Management</span><span style="left:1206px">Last Modified: 04/14/2020</span><span style="left:1344px">Contact Us</span><span style="left:1409px">Privacy Policy</span><span style="left:1487px">Disclaimer</span><span style="left:1549px">USA.gov</span></div>
</div>
</body>
</html>
